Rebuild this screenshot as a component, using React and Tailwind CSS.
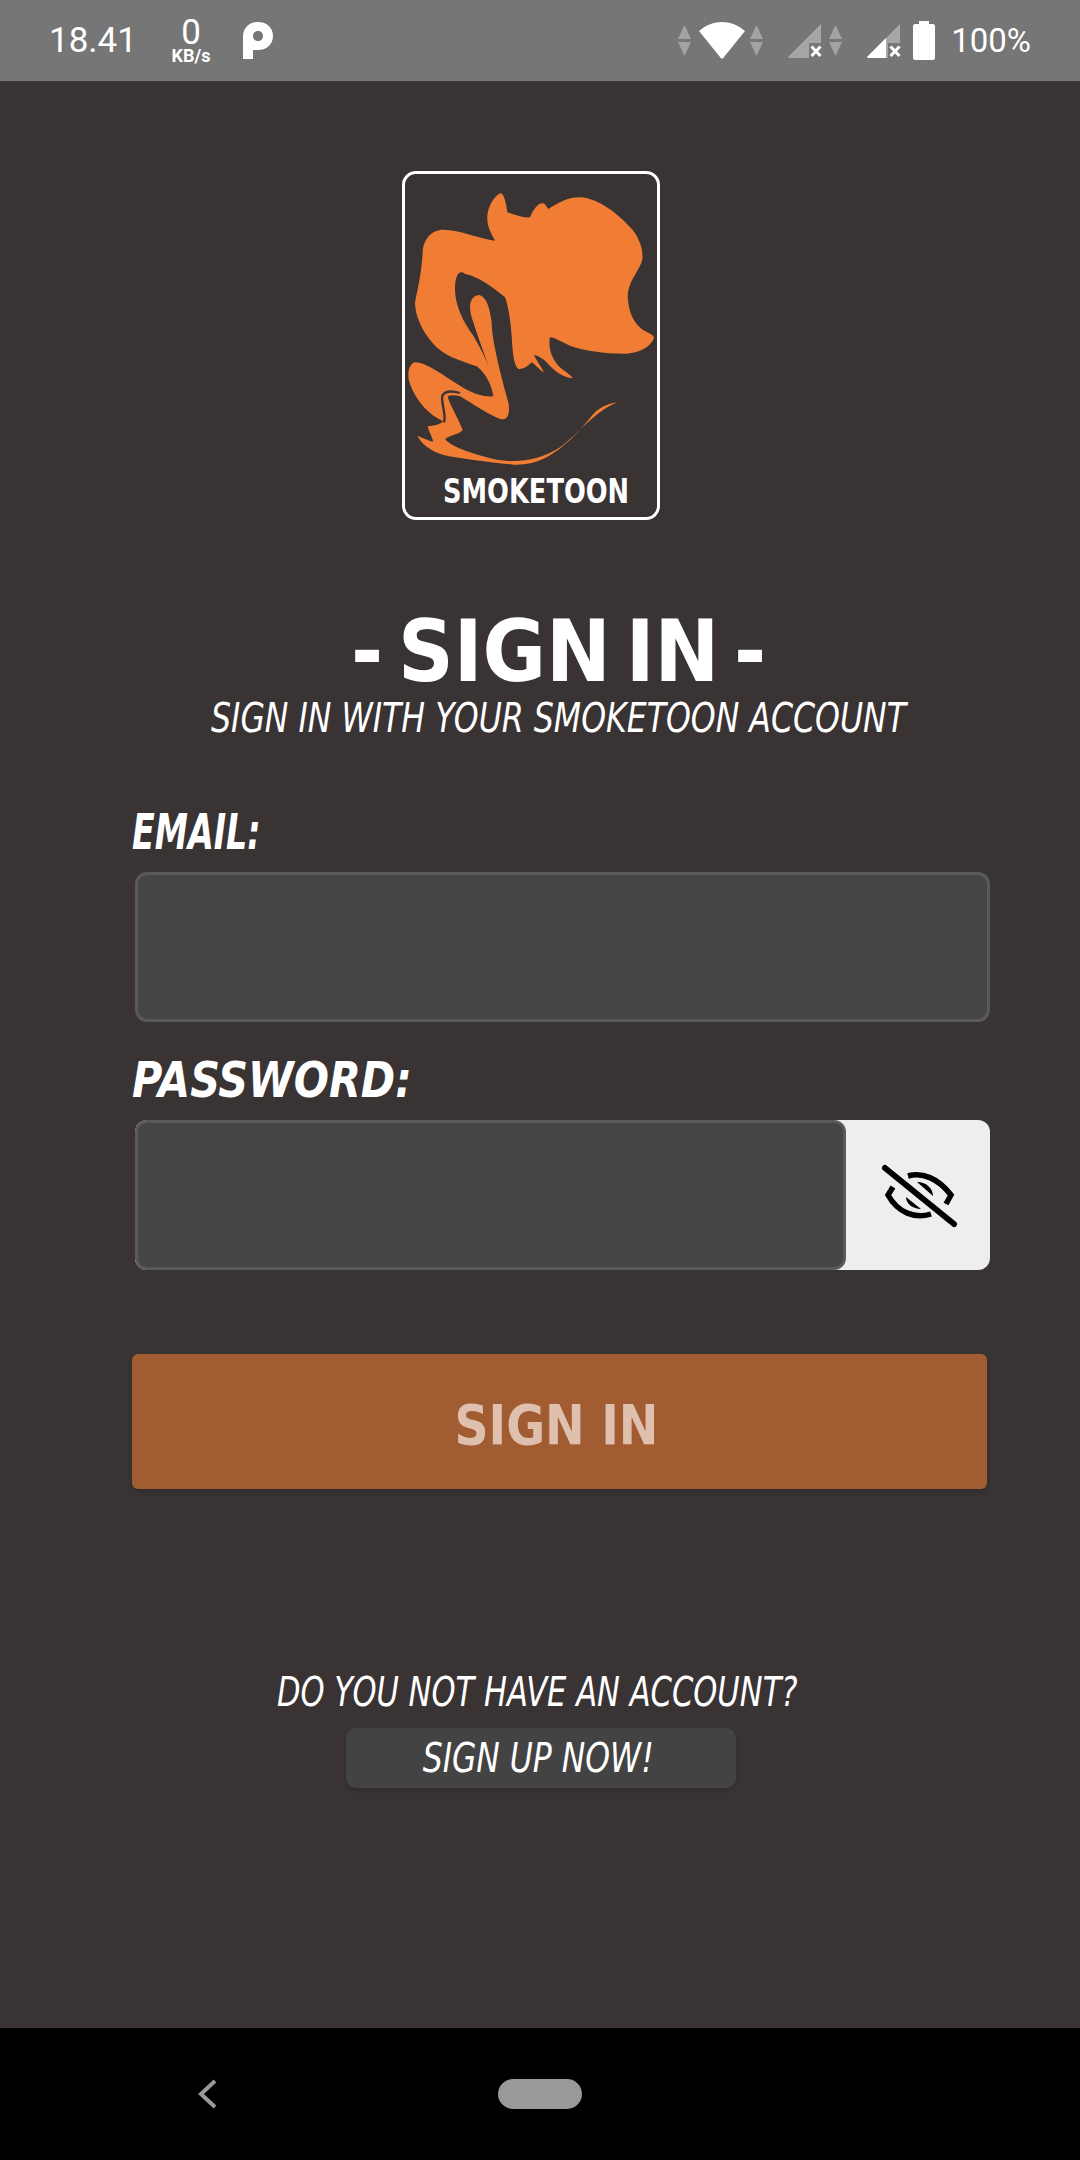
const comic = "font-['Liberation_Sans_Narrow','DejaVu_Sans_Condensed','Liberation_Sans',sans-serif]";

function Arrows() {
  return (
    <svg width="13" height="31" viewBox="0 0 13 31" fill="#a3a3a3">
      <path d="M6.5 0L13 14H0Z" />
      <path d="M6.5 31L13 17H0Z" />
    </svg>
  );
}

function Signal({ filled }) {
  return (
    <svg width="34" height="34" viewBox="0 0 34 34">
      <path d="M0 33L33 0V19H21V34H1Z" fill="#a6a6a6" />
      {filled && <path d="M0 33L19 14V34H1Z" fill="#fff" />}
      <path d="M23.5 22.5L32.5 32M32.5 22.5L23.5 32" stroke="#fff" strokeWidth="3" />
    </svg>
  );
}

function StatusBar() {
  return (
    <div className="flex h-[81px] items-center justify-between bg-[#767676] pl-[49px] pr-[49px] font-['Roboto',sans-serif] text-white">
      <div className="flex items-center">
        <span className="w-[87px] text-[35px] leading-none">18.41</span>
        <div className="ml-[32px] flex w-[46px] flex-col items-center">
          <span className="text-[35px] leading-[29px]">0</span>
          <span className="text-[18px] font-bold leading-[17px]">KB/s</span>
        </div>
        <svg className="ml-[29px]" width="30" height="37" viewBox="0 0 30 37" fill="#fff">
          <path fillRule="evenodd" d="M0 15C0 6 6 0 15 0C24 0 30 6 30 14C30 22 24 28 15 28H10V37H0ZM10 14C10 17 12 19 15 19C18 19 20 17 20 14C20 11 18 9 15 9C12 9 10 11 10 14Z" />
        </svg>
      </div>
      <div className="flex items-center">
        <Arrows />
        <svg className="ml-[8px]" width="46" height="37" viewBox="0 0 46 37" fill="#fff">
          <path d="M0 9C14 -3 32 -3 46 9L25 35C24 37 22 37 21 35Z" />
        </svg>
        <div className="ml-[5px]"><Arrows /></div>
        <div className="ml-[25px]"><Signal /></div>
        <div className="ml-[7px]"><Arrows /></div>
        <div className="ml-[25px]"><Signal filled /></div>
        <svg className="ml-[12px]" width="22" height="39" viewBox="0 0 22 39" fill="#fff">
          <path d="M6 0H16V3H20C21 3 22 4 22 5V37C22 38 21 39 20 39H2C1 39 0 38 0 37V5C0 4 1 3 2 3H6Z" />
        </svg>
        <span className="ml-[16px] text-[33px] leading-none">100%</span>
      </div>
    </div>
  );
}

function Logo() {
  return (
    <div className="ml-[402px] mt-[90px] flex h-[349px] w-[258px] flex-col rounded-[14px] border-[3px] border-white">
      <svg width="252" height="300" viewBox="75 45 756 900" className="shrink-0">
        <path
          fill="#f07d33"
          d="M362 103C372 105 378 130 382 160C400 165 430 178 450 175C460 150 475 130 490 133C497 135 500 145 505 150C530 135 560 115 600 115C660 118 720 170 760 215C785 250 792 285 785 310C770 345 745 370 743 410C745 450 755 485 785 510C800 522 822 525 822 537C815 560 780 582 740 584C680 585 610 575 570 560C545 550 525 535 510 535C505 560 510 590 535 620C550 635 570 645 578 657C555 658 525 640 500 610C490 600 475 590 462 588C470 605 485 625 492 640C480 635 470 620 455 610C445 620 430 632 415 630C400 615 398 580 395 530C392 490 385 440 375 415C340 385 290 350 255 345C240 330 225 345 225 390C225 440 250 490 280 530C300 565 325 610 335 655C320 600 295 540 280 490C265 450 265 415 295 408C320 410 330 450 335 490C335 540 360 640 385 730C392 770 380 785 360 780C320 765 280 735 240 712C225 708 212 708 203 712C208 735 228 765 248 812C240 826 215 825 195 840C210 860 260 880 340 900C400 912 470 910 540 865C590 830 640 760 712 730C680 735 660 745 640 765C610 800 570 855 500 895C460 915 430 918 400 917C330 910 250 900 190 888C150 875 125 855 112 830C125 835 145 845 160 848C155 830 145 815 143 802C160 800 175 800 190 787C150 770 110 730 90 675C80 650 85 615 105 610C140 610 190 650 240 680C270 700 310 715 340 712C335 680 320 645 290 622C240 605 190 590 160 555C125 515 105 470 105 430C115 380 125 340 128 280C130 240 155 212 190 212C240 212 300 240 345 245C335 225 320 205 322 170C325 140 345 108 362 103Z"
        />
        <path d="M240 702C215 695 195 695 187 710C183 735 200 770 192 790" fill="none" stroke="#393333" strokeWidth="7" />
      </svg>
      <span className={`${comic} ml-[38px] origin-left scale-x-[0.84] whitespace-nowrap text-[34px] font-bold leading-none text-white`}>SMOKETOON</span>
    </div>
  );
}

function Field({ label, labelClass, children }) {
  return (
    <>
      <label className={`${comic} flex h-[40px] origin-left items-center whitespace-nowrap text-[50px] font-bold italic leading-none text-white ${labelClass}`}>{label}</label>
      {children}
    </>
  );
}

function InputBox({ width }) {
  return <input className={`h-[150px] rounded-[12px] border-[3px] border-[#595959] bg-[#454545] ${width}`} />;
}

export default function App() {
  return (
    <div className="flex min-h-[2160px] w-[1080px] flex-col bg-[#393333]">
      <StatusBar />
      <main className="flex flex-1 flex-col">
        <Logo />
        <h1 className={`${comic} ml-[351px] mt-[96px] flex h-[70px] w-fit items-center whitespace-nowrap text-[86px] font-bold leading-none text-white [word-spacing:-12px]`}>- SIGN IN -</h1>
        <p className={`${comic} ml-[211px] mt-[14px] flex h-[36px] w-fit origin-left scale-x-[0.878] items-center whitespace-nowrap text-[40px] italic leading-none text-white`}>SIGN IN WITH YOUR SMOKETOON ACCOUNT</p>

        <div className="mt-[76px] flex flex-col pl-[132px] pr-[93px]">
          <Field label="EMAIL:" labelClass="scale-x-[0.74]">
            <div className="ml-[3px] mr-[-3px] mt-[20px] flex">
              <InputBox width="w-full" />
            </div>
          </Field>
          <Field label="PASSWORD:" labelClass="mt-[38px] scale-x-[0.92]">
            <div className="ml-[3px] mr-[-3px] mt-[20px] flex items-stretch rounded-[12px] bg-[#eeeeee]">
              <InputBox width="w-[711px]" />
              <button className="flex flex-1 items-center justify-end">
                <svg width="130" height="100" viewBox="0 0 130 100">
                  <path d="M25 23L94 79" fill="none" stroke="#000" strokeWidth="6" strokeLinecap="round" />
                  <path d="M48 31C62 27 78 33 91 50L86 59M33 42L28 50C38 68 55 74 71 69" fill="none" stroke="#000" strokeWidth="5.5" />
                  <path d="M57 37C67 37 73 44 73 51ZM46 52C46 59 53 64 61 64Z" fill="#000" />
                </svg>
              </button>
            </div>
          </Field>
          <button className={`${comic} mt-[84px] flex h-[135px] items-center justify-center rounded-[6px] bg-[#a25c32] text-[56px] font-bold leading-none text-[#dfc0ae] shadow-md`}>
            <span className="mt-[6px] -ml-[6px] scale-x-[0.94] whitespace-nowrap">SIGN IN</span>
          </button>
        </div>

        <p className={`${comic} ml-[277px] mt-[185px] flex h-[36px] w-fit origin-left scale-x-[0.85] items-center whitespace-nowrap text-[40px] italic leading-none text-white`}>DO YOU NOT HAVE AN ACCOUNT?</p>
        <button className={`${comic} ml-[346px] mt-[18px] flex h-[60px] w-[390px] items-center justify-center rounded-[10px] bg-[#434343] text-[40px] italic leading-none text-white shadow-md`}>
          <span className="-ml-[6px] scale-x-[0.874] whitespace-nowrap">SIGN UP NOW!</span>
        </button>
      </main>

      <nav className="flex h-[132px] items-start bg-black pl-[198px] pt-[51px]">
        <svg width="18" height="30" viewBox="0 0 18 30">
          <path d="M17 2L3 15L17 28" fill="none" stroke="#999" strokeWidth="4" />
        </svg>
        <div className="ml-[282px] h-[30px] w-[84px] rounded-full bg-[#999999]" />
      </nav>
    </div>
  );
}
